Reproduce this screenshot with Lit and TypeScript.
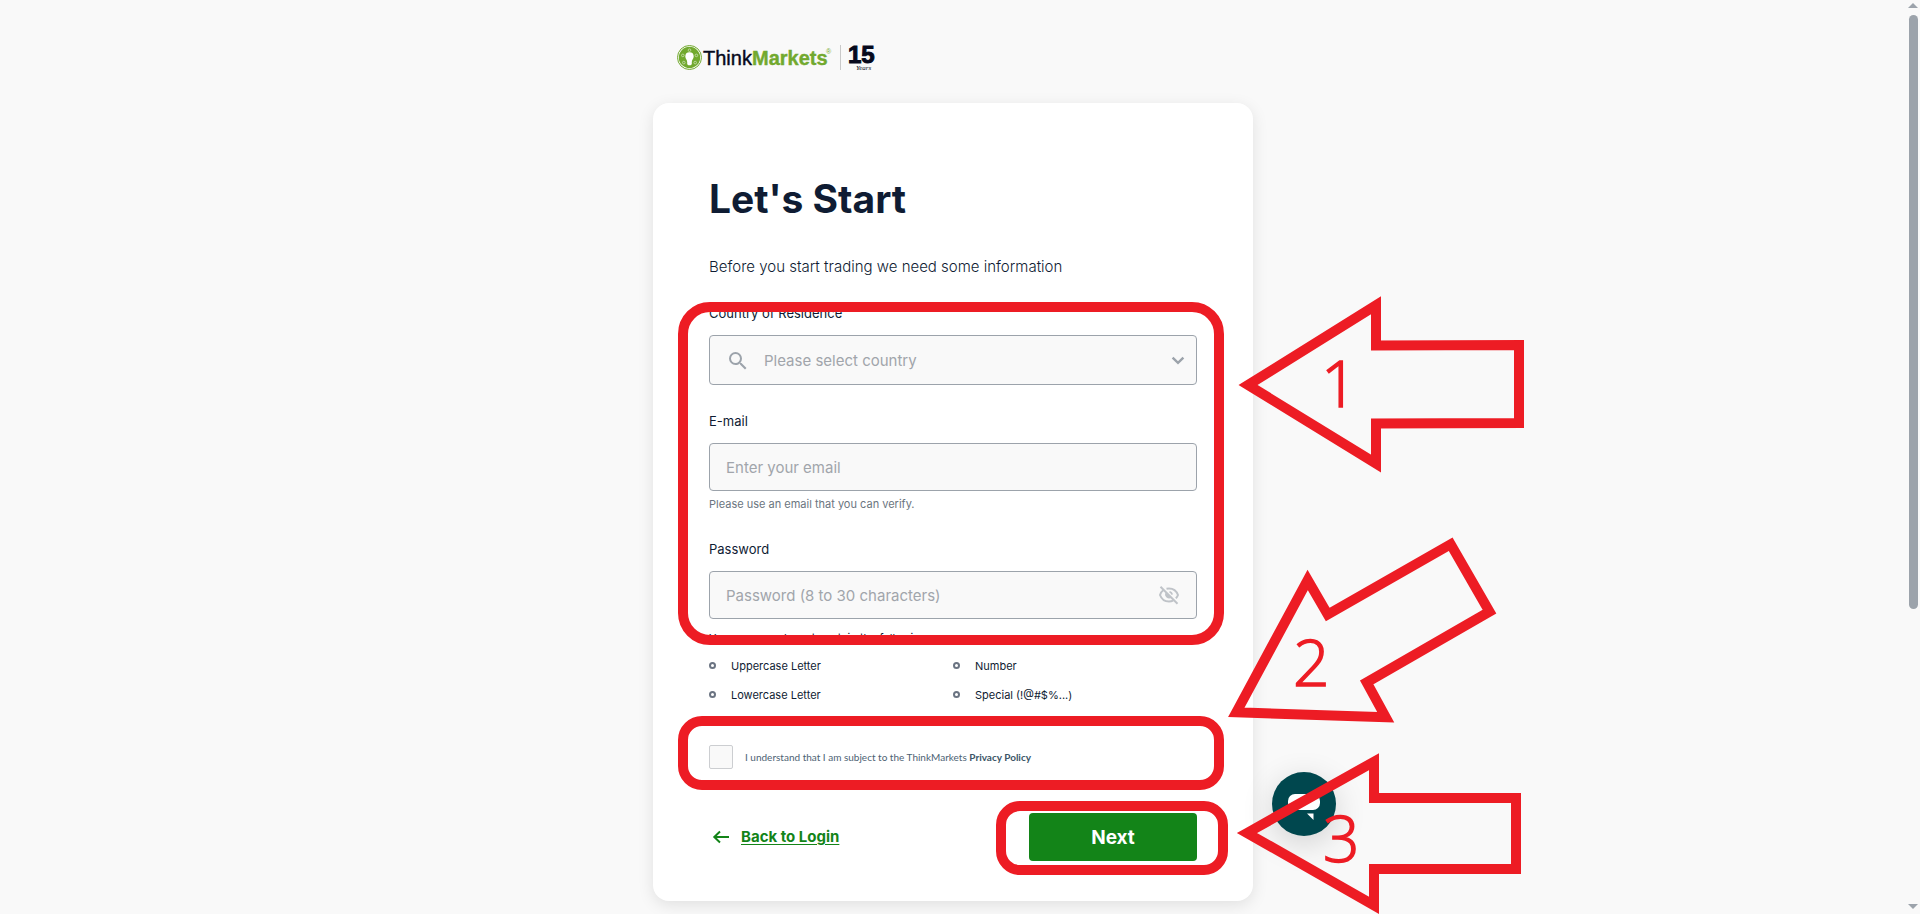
import { LitElement, html, svg, css } from "lit";
import { customElement, property } from "lit/decorators.js";

@customElement("tm-logo")
class TmLogo extends LitElement {
  static styles = css`
    :host { display: block; }
    svg { display: block; overflow: visible; }
    .think { font: 400 20px "Liberation Sans", Arial, sans-serif; fill: #06091c; stroke: #06091c; stroke-width: 0.4; }
    .markets { font: 700 20px "Liberation Sans", Arial, sans-serif; fill: #72a92f; stroke: #72a92f; stroke-width: 0.4; }
    .reg { font: 400 7px "Liberation Sans", Arial, sans-serif; fill: #72a92f; }
    .fifteen { font: 700 24px "Liberation Sans Narrow", "Liberation Sans", Arial, sans-serif; fill: #06091c; stroke: #06091c; stroke-width: 1; }
    .years { font: italic 400 7px "Liberation Serif", serif; fill: #06091c; }
  `;
  render() {
    const letters = [[12.5, 5.2], [19.4, 10.4], [5.8, 10.4], [6.8, 17.6], [18.2, 17.6]];
    return html`
      <svg width="200" height="28" viewBox="0 0 200 28" role="img" aria-label="ThinkMarkets, 15 years">
        <circle cx="12.5" cy="12.5" r="12" fill="#fff" stroke="#72a92f" stroke-width="1" />
        <circle cx="12.5" cy="12.5" r="10.7" fill="#72a92f" />
        ${letters.map(([x, y]) => svg`<circle cx=${x} cy=${y} r="1.3" fill="none" stroke="#c9dfb0" stroke-width="0.8" />`)}
        <path d="M12.5 7.2a4.3 4.3 0 0 0-4.2 4.3c0 2.4 1.9 3.2 1.9 5.4v2.3l1.2 1h2.2l1.2-1v-2.3c0-2.2 1.9-3 1.9-5.4a4.3 4.3 0 0 0-4.2-4.3z" fill="#fff" />
        <text class="think" x="26" y="20">Think</text>
        <text class="markets" x="75" y="20">Markets</text>
        <text class="reg" x="149" y="9">®</text>
        <path d="M163.5 0v25" stroke="#c9c9c9" stroke-width="1" />
        <text class="fifteen" x="171" y="18">15</text>
        <text class="years" x="179" y="25">Years</text>
      </svg>
    `;
  }
}

@customElement("tm-annotations")
class TmAnnotations extends LitElement {
  static styles = css`
    :host { display: block; }
    svg { display: block; overflow: visible; }
    .line { fill: none; stroke: #ed1c24; stroke-width: 10; stroke-miterlimit: 10; }
    .digit { font: 300 64px "Open Sans", "Noto Sans", sans-serif; fill: #ed1c24; stroke: #ed1c24; stroke-width: 1.5; }
  `;
  render() {
    return html`
      <svg width="600" height="914" viewBox="0 0 600 914" aria-hidden="true">
        <rect class="line" x="30" y="307" width="536" height="333" rx="27" />
        <rect class="line" x="30" y="721" width="536" height="64" rx="19" />
        <rect class="line" x="348" y="806" width="222" height="64" rx="19" />
        <polygon class="line" points="595,385 723,305.3 723,345.5 866,345 866,423 723,423.5 723,463.5" />
        <polygon class="line" points="583.3,712.3 654.7,580 674.7,614.5 797.7,544.2 836.5,611.7 713.7,682.3 732.7,717.2" />
        <polygon class="line" points="594,833 721,761.7 721,798 863,798 863,869 721,869 721,905.3" />
        <text class="digit" x="668" y="407">1</text>
        <text class="digit" x="640" y="686">2</text>
        <text class="digit" x="670" y="862">3</text>
      </svg>
    `;
  }
}

@customElement("tm-scrollbar")
class TmScrollbar extends LitElement {
  static styles = css`
    :host { display: flex; flex-direction: column; align-items: center; gap: 7px; box-sizing: border-box; padding: 3px 0 5px; }
    .arrow { width: 0; height: 0; border: 5px solid transparent; border-top: 0; border-bottom-color: #9ca3ab; }
    .arrow.down { border: 5px solid transparent; border-bottom: 0; border-top-color: #9ca3ab; }
    .track { flex: 1; width: 9px; }
    .thumb { background: #9ca3ab; border-radius: 5px; }
  `;
  @property({ type: Number }) ratio = 1;
  render() {
    return html`
      <div class="arrow"></div>
      <div class="track"><div class="thumb" style="height:${this.ratio * 100}%"></div></div>
      <div class="arrow down"></div>
    `;
  }
}

@customElement("app-root")
class AppRoot extends LitElement {
  static styles = css`
    :host {
      display: flex;
      min-height: 100vh;
      background: #f9f9f9;
      color: #0f1c33;
      font-family: Inter, "Open Sans", sans-serif;
      overflow: hidden;
    }
    *, *::before { box-sizing: border-box; }
    main { flex: 1; min-width: 0; }
    .column { position: relative; width: 100%; max-width: 600px; margin: 0 auto; }
    header { padding: 45px 24px 30px; }
    .card { background: #fff; border-radius: 16px; padding: 72px 56px 40px; box-shadow: 0 4px 16px rgba(0, 0, 0, 0.1); }
    h1 { margin: 0 0 32px; font-size: 39px; line-height: 48px; font-weight: 700; }
    .intro { margin: 0 0 24px; font-size: 15px; line-height: 24px; font-weight: 300; }
    .field { margin-bottom: 26px; }
    .field.last { margin-bottom: 11px; }
    .field label { display: block; font-size: 13px; line-height: 20px; margin-bottom: 12px; }
    .box { position: relative; }
    .control {
      display: block;
      width: 100%;
      height: 48px;
      padding: 0 16px;
      border: 1px solid #9ca3ab;
      border-radius: 4px;
      background: #f9f9f9;
      font: 400 15px Inter, "Open Sans", sans-serif;
      color: #a1a5ab;
      outline: none;
    }
    .control::placeholder { color: #a1a5ab; opacity: 1; }
    select.control { height: 50px; padding-left: 54px; appearance: none; }
    .icon { position: absolute; top: 0; bottom: 0; margin: auto 0; pointer-events: none; }
    .search { left: 16px; }
    .chevron { right: 12px; }
    .reveal { right: 16px; width: 24px; height: 24px; padding: 0; border: 0; background: none; pointer-events: auto; }
    .reveal svg { display: block; }
    .hint { margin: 5px 0 0; font-size: 11px; line-height: 17px; color: #6b7580; }
    .rules-title { margin: 0 0 11px; font-size: 11px; line-height: 17px; }
    .rules { display: grid; grid-template-columns: 1fr 1fr; row-gap: 12px; list-style: none; margin: 0 0 41px; padding: 0; font-size: 11px; line-height: 17px; }
    .rules li { display: flex; gap: 15px; }
    .rules li::before { content: ""; width: 7px; height: 7px; margin-top: 4px; border: 2px solid #6b7482; border-radius: 50%; }
    .consent { display: flex; align-items: center; gap: 12px; margin-bottom: 44px; font: 400 10px/16px Lato, "Open Sans", sans-serif; color: #4d6273; }
    .consent input { appearance: none; flex: none; width: 24px; height: 24px; margin: 0; border: 1px solid #ccced1; border-radius: 2px; background: #f9f9f9; }
    .consent a { color: #3c5567; font-weight: 700; text-decoration: none; }
    .actions { display: flex; align-items: center; justify-content: space-between; }
    .back { display: flex; align-items: center; gap: 8px; color: #138418; font-size: 15px; line-height: 24px; font-weight: 700; text-decoration: none; }
    .back span { text-decoration: underline; text-underline-offset: 2px; }
    .next { width: 168px; height: 48px; border: 0; border-radius: 4px; background: #138418; color: #fff; font: 700 19px Inter, "Open Sans", sans-serif; }
    .chat { position: absolute; left: 619px; top: 772px; width: 64px; height: 64px; padding: 0; border: 0; border-radius: 50%; background: #00474e; box-shadow: 0 8px 32px rgba(0, 0, 0, 0.16); }
    .chat svg { display: block; }
    tm-annotations { position: absolute; left: 0; top: 0; pointer-events: none; }
    tm-scrollbar { flex: none; width: 14px; height: 100vh; }
  `;

  render() {
    const rules = ["Uppercase Letter", "Number", "Lowercase Letter", "Special (!@#$%...)"];
    return html`
      <main>
        <div class="column">
          <header><tm-logo></tm-logo></header>
          <form class="card" @submit=${(e: Event) => e.preventDefault()}>
            <h1>Let's Start</h1>
            <p class="intro">Before you start trading we need some information</p>

            <div class="field">
              <label for="country">Country of Residence</label>
              <div class="box">
                <select id="country" class="control">
                  <option>Please select country</option>
                </select>
                <svg class="icon search" width="24" height="24" viewBox="0 0 24 24" fill="#9ca3ab" aria-hidden="true">
                  <path d="M15.5 14h-.79l-.28-.27A6.47 6.47 0 0 0 16 9.5 6.5 6.5 0 1 0 9.5 16c1.61 0 3.09-.59 4.23-1.57l.27.28v.79l5 4.99L20.49 19l-4.99-5zm-6 0C7.01 14 5 11.99 5 9.5S7.01 5 9.5 5 14 7.01 14 9.5 11.99 14 9.5 14z" transform="translate(1 1)" />
                </svg>
                <svg class="icon chevron" width="14" height="14" viewBox="0 0 14 14" fill="none" stroke="#9ca3ab" stroke-width="2.4" aria-hidden="true">
                  <path d="M1.6 4.6 7 9.8l5.4-5.2" />
                </svg>
              </div>
            </div>

            <div class="field">
              <label for="email">E-mail</label>
              <input id="email" class="control" type="email" placeholder="Enter your email" />
              <p class="hint">Please use an email that you can verify.</p>
            </div>

            <div class="field last">
              <label for="password">Password</label>
              <div class="box">
                <input id="password" class="control" type="password" placeholder="Password (8 to 30 characters)" />
                <button class="icon reveal" type="button" aria-label="Show password">
                  <svg width="24" height="24" viewBox="0 0 24 24" fill="none" stroke="#bfc3c8" stroke-width="2">
                    <path d="M9.5 5.7c.8-.2 1.7-.3 2.5-.3 4.3 0 7.5 2.5 9 6.6-.5 1.3-1.2 2.4-2.1 3.4M6.2 7.2C4.700 8.300 3.600 9.900 3 12c1.500 4.100 4.700 6.600 9 6.600 1.500 0 2.900-.3 4.100-.9" />
                    <path d="M3.5 3.7l17 17" />
                    <path d="M8.6 9.5a4 4 0 0 0 6 5z" fill="#bfc3c8" stroke="none" />
                    <path d="M12.5 8.9a3.200 3.200 0 0 1 2.600 2.800" stroke-width="1.6" />
                  </svg>
                </button>
              </div>
            </div>

            <p class="rules-title">Your password must contain the following:</p>
            <ul class="rules">
              ${rules.map((r) => html`<li>${r}</li>`)}
            </ul>

            <div class="consent">
              <input id="consent" type="checkbox" />
              <label for="consent">I understand that I am subject to the ThinkMarkets <a href="#privacy">Privacy Policy</a></label>
            </div>

            <div class="actions">
              <a class="back" href="#login">
                <svg width="24" height="24" viewBox="0 0 24 24" fill="none" stroke="#138418" stroke-width="2" aria-hidden="true">
                  <path d="M20 12H5M11 6.5 5.3 12l5.7 5.5" />
                </svg>
                <span>Back to Login</span>
              </a>
              <button class="next" type="submit">Next</button>
            </div>
          </form>

          <button class="chat" type="button" aria-label="Open chat">
            <svg width="64" height="64" viewBox="0 0 64 64" fill="#fff">
              <rect x="16" y="22" width="32" height="16" rx="7" />
              <path d="M35 41.5h6.500V48z" />
            </svg>
          </button>
          <tm-annotations></tm-annotations>
        </div>
      </main>
      <tm-scrollbar .ratio=${0.673} aria-hidden="true"></tm-scrollbar>
    `;
  }
}
